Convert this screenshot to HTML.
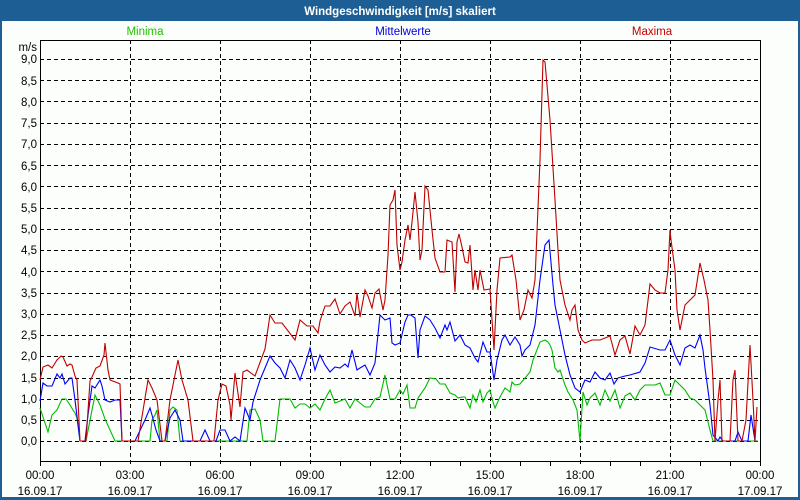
<!DOCTYPE html>
<html><head><meta charset="utf-8"><style>
html,body{margin:0;padding:0;width:800px;height:500px;overflow:hidden;background:#fff}
svg{display:block}
text{font-family:"Liberation Sans","DejaVu Sans",sans-serif;font-size:11.5px}
</style></head><body>
<svg width="800" height="500" viewBox="0 0 800 500" xmlns="http://www.w3.org/2000/svg">
<rect x="0" y="0" width="800" height="500" fill="#1d5f95"/>
<rect x="2" y="21" width="796" height="476" fill="#fcfefc"/>
<text x="400" y="15" fill="#fff" font-weight="bold" text-anchor="middle" font-size="11.5">Windgeschwindigkeit [m/s] skaliert</text>
<text x="145" y="35" fill="#22c000" text-anchor="middle" font-size="11">Minima</text>
<text x="403" y="35" fill="#0000e0" text-anchor="middle" font-size="11">Mittelwerte</text>
<text x="652" y="35" fill="#c00000" text-anchor="middle" font-size="11">Maxima</text>
<g stroke="#000" stroke-width="1" stroke-dasharray="4,3" fill="none">
<path d="M40 59.5H760M40 80.5H760M40 101.5H760M40 123.5H760M40 144.5H760M40 165.5H760M40 186.5H760M40 208.5H760M40 229.5H760M40 250.5H760M40 271.5H760M40 293.5H760M40 314.5H760M40 335.5H760M40 356.5H760M40 378.5H760M40 399.5H760M40 420.5H760M40 441.5H760"/>
<path d="M130.5 40V466M220.5 40V466M310.5 40V466M400.5 40V466M490.5 40V466M580.5 40V466M670.5 40V466"/>
</g>
<rect x="40.5" y="40.5" width="720" height="421" fill="none" stroke="#000"/>
<path d="M70.5 461V466M100.5 461V466M160.5 461V466M190.5 461V466M250.5 461V466M280.5 461V466M340.5 461V466M370.5 461V466M430.5 461V466M460.5 461V466M520.5 461V466M550.5 461V466M610.5 461V466M640.5 461V466M700.5 461V466M730.5 461V466M40.5 461V466M760.5 461V466" stroke="#000"/>
<g fill="#000" text-anchor="end">
<text x="37" y="51">m/s</text>
<text x="37" y="63">9,0</text><text x="37" y="85">8,5</text><text x="37" y="106">8,0</text><text x="37" y="127">7,5</text><text x="37" y="148">7,0</text><text x="37" y="170">6,5</text><text x="37" y="191">6,0</text><text x="37" y="212">5,5</text><text x="37" y="233">5,0</text><text x="37" y="254">4,5</text><text x="37" y="276">4,0</text><text x="37" y="297">3,5</text><text x="37" y="318">3,0</text><text x="37" y="339">2,5</text><text x="37" y="360">2,0</text><text x="37" y="382">1,5</text><text x="37" y="403">1,0</text><text x="37" y="424">0,5</text><text x="37" y="445">0,0</text>
</g>
<g fill="#000" text-anchor="middle">
<text x="40" y="479">00:00</text><text x="130" y="479">03:00</text><text x="220" y="479">06:00</text><text x="310" y="479">09:00</text><text x="400" y="479">12:00</text><text x="490" y="479">15:00</text><text x="580" y="479">18:00</text><text x="670" y="479">21:00</text><text x="760" y="479">00:00</text>
<text x="40" y="495">16.09.17</text><text x="130" y="495">16.09.17</text><text x="220" y="495">16.09.17</text><text x="310" y="495">16.09.17</text><text x="400" y="495">16.09.17</text><text x="490" y="495">16.09.17</text><text x="580" y="495">16.09.17</text><text x="670" y="495">16.09.17</text><text x="760" y="495">17.09.17</text>
</g>
<g fill="none" stroke-width="1.1">
<polyline stroke="#00bb00" points="40,408 44,420 48,432 52,415 57,410 62,399 66,399 70,405 73,410 75,413 77,418 80,441 86,441 92,410 95,395 100,405 105,419 110,430 115,441 150,441 152,420 155,415 157,410 160,441 167,441 170,410 173,407 177,410 180,441 247,441 250,410 255,409 260,420 263,441 275,441 280,399 290,399 295,408 300,404 305,404 310,408 315,404 320,410 325,399 330,390 335,403 340,401 345,399 350,408 355,399 360,403 365,407 370,407 375,399 380,397 385,375 390,399 395,399 400,390 403,394 407,385 410,408 415,408 418,398 425,388 430,378 436,379 440,384 445,384 450,393 455,395 458,398 462,397 465,397 470,408 473,395 476,402 480,390 483,402 487,393 490,390 493,402 495,408 500,397 505,388 510,392 512,382 515,385 520,384 525,378 530,372 533,360 540,342 545,340 548,342 550,345 552,350 555,368 558,372 560,370 565,385 568,392 573,400 577,410 580,441 583,392 587,405 590,398 595,393 600,405 605,390 610,401 615,390 620,408 625,396 630,393 635,400 640,390 645,385 650,385 655,385 660,383 665,395 670,395 675,380 680,385 685,390 690,398 695,400 700,405 705,410 710,430 713,441 758,441"/>
<polyline stroke="#0000ff" points="40,401 43,383 47,386 52,386 57,374 60,378 62,374 65,384 70,378 72,378 75,400 80,441 85,441 88,415 92,386 95,388 100,380 102,386 105,400 110,402 115,400 120,400 122,441 135,441 145,420 150,408 152,415 156,430 160,441 165,441 170,418 175,410 180,420 183,441 200,441 205,430 210,441 216,441 220,430 225,430 230,441 235,437 240,441 245,408 250,420 253,402 260,380 270,356 275,363 280,368 285,378 290,360 295,368 300,380 305,365 310,348 315,370 320,355 325,365 330,372 335,367 340,368 345,364 348,367 352,350 357,370 360,368 365,365 370,375 375,363 380,315 385,320 390,318 392,343 395,345 400,343 405,322 408,315 411,315 415,318 418,358 420,330 425,316 430,320 435,328 440,338 445,325 447,330 450,322 455,341 460,335 465,345 470,348 475,358 478,362 483,342 487,352 490,352 494,380 497,360 502,340 505,335 510,345 515,337 520,345 522,356 525,350 530,345 532,337 535,325 540,280 545,245 549,240 553,285 555,305 560,330 565,355 570,375 575,388 580,392 585,380 590,382 595,372 600,378 605,380 610,373 614,384 618,378 625,376 630,375 640,372 645,363 650,347 660,350 665,350 670,340 675,355 680,365 685,348 690,345 695,348 700,335 703,350 705,368 710,405 713,435 718,441 720,437 723,441 735,441 738,432 742,441 748,441 751,415 755,441"/>
<polyline stroke="#c00000" points="40,380 43,367 48,365 52,368 57,360 61,356 63,357 67,366 70,364 72,365 75,376 77,380 80,441 86,441 90,381 92,377 96,368 100,366 104,355 105,343 108,370 110,380 118,383 120,384 122,441 138,441 148,380 152,388 157,400 162,441 165,441 170,400 178,360 182,380 188,400 193,441 214,441 218,400 222,384 226,386 230,405 231,420 235,373 240,407 243,372 247,370 255,376 265,349 270,315 275,323 282,323 295,340 300,320 307,326 313,326 318,333 320,321 325,306 330,306 335,299 340,314 345,306 350,302 355,316 357,293 360,317 365,290 368,296 372,308 375,293 379,289 383,310 385,300 388,255 390,205 393,200 395,190 397,245 400,270 402,262 405,240 408,225 410,240 412,222 415,192 418,222 420,260 422,250 425,186 428,190 432,230 435,258 440,272 445,272 447,240 452,242 455,292 457,242 459,234 462,247 465,262 468,263 470,245 473,290 475,270 478,290 480,270 484,290 490,289 494,350 497,290 500,258 510,257 512,255 516,280 520,320 524,310 528,290 532,298 535,280 540,160 543,60 545,62 550,120 555,200 558,250 560,280 565,305 570,320 572,310 575,305 578,330 582,340 585,343 592,340 600,340 610,336 615,355 620,340 625,336 630,354 635,326 640,335 645,325 650,284 655,290 660,293 665,293 668,270 670,230 671,240 675,270 677,310 680,330 685,305 690,300 695,295 700,263 704,280 708,300 710,330 713,380 715,441 718,400 720,380 722,441 730,441 733,380 735,370 738,441 742,441 746,420 750,345 753,400 755,441 757,407"/>
</g>
</svg>
</body></html>
